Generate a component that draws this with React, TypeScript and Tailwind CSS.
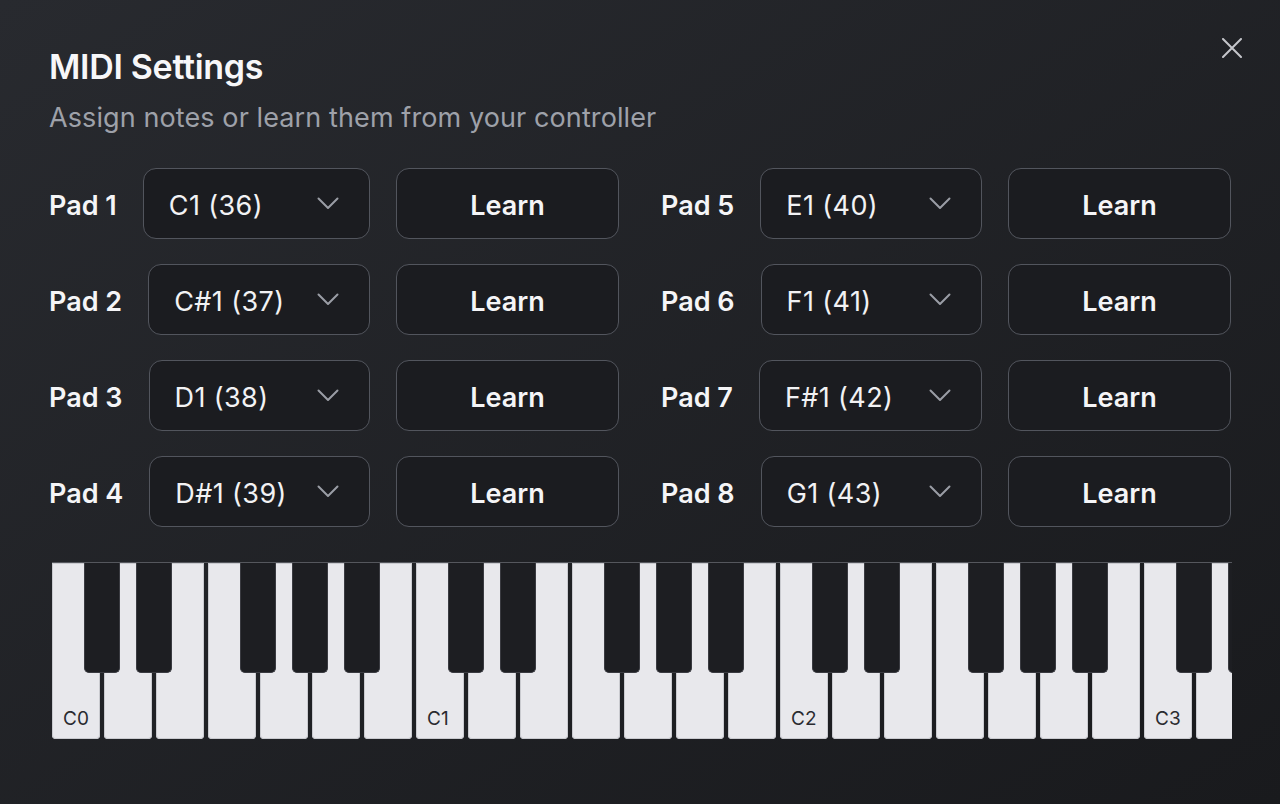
import React from "react";

const pads: [string, string][] = [
  ["Pad 1", "C1 (36)"],
  ["Pad 5", "E1 (40)"],
  ["Pad 2", "C#1 (37)"],
  ["Pad 6", "F1 (41)"],
  ["Pad 3", "D1 (38)"],
  ["Pad 7", "F#1 (42)"],
  ["Pad 4", "D#1 (39)"],
  ["Pad 8", "G1 (43)"],
];

function Chevron() {
  return (
    <svg width="22" height="13" viewBox="0 0 22 13" fill="none" className="shrink-0">
      <polyline points="1.5,1.5 11,11 20.5,1.5" stroke="#9a9da5" strokeWidth="2" strokeLinecap="round" strokeLinejoin="round" />
    </svg>
  );
}

function PadRow({ label, note }: { label: string; note: string }) {
  return (
    <div className="flex h-[71px] items-center gap-[26px]">
      <div className="whitespace-nowrap pt-[5px] text-[27px] font-semibold text-[#f5f5f7]">{label}</div>
      <div className="flex h-full flex-1 items-center justify-between rounded-[13px] border border-[#52555d] bg-[#1b1c20] pl-[25px] pr-[30px] text-[27px] tracking-[0.4px] text-[#f2f2f4]">
        <span className="pt-[5px]">{note}</span>
        <Chevron />
      </div>
      <button className="flex h-full w-[223px] shrink-0 items-center justify-center rounded-[13px] border border-[#52555d] bg-[#1b1c20] pt-[5px] text-[27px] font-semibold text-[#f5f5f7]">
        Learn
      </button>
    </div>
  );
}

function Keyboard() {
  const whiteCount = 24;
  const whites = Array.from({ length: whiteCount }, (_, i) => i);
  const blacks = whites.filter((i) => [0, 1, 3, 4, 5].includes(i % 7));
  return (
    <div className="relative ml-[3px] h-[177px] w-[1180px] overflow-hidden border-t border-[#55575d]">
      <div className="flex gap-[4px]">
        {whites.map((i) => (
          <div
            key={i}
            className="relative h-[176px] w-[48px] shrink-0 rounded-b-[4px] bg-[#e8e8ec] shadow-[inset_0_0_0_1px_#c9cacf]"
          >
            {i % 7 === 0 && (
              <span className="absolute bottom-[8px] left-[11px] text-[19px] leading-[24px] text-[#2a2b30]">
                C{Math.floor(i / 7)}
              </span>
            )}
          </div>
        ))}
      </div>
      {blacks.map((i) => (
        <div
          key={"b" + i}
          className="absolute top-0 h-[110px] w-[36px] rounded-b-[5px] border border-t-0 border-[#3a3b41] bg-[#1d1e22]"
          style={{ left: 52 * i + 32 }}
        />
      ))}
    </div>
  );
}

export default function App() {
  return (
    <div className="relative h-[804px] w-full overflow-hidden bg-linear-to-br from-[#282a2f] to-[#191a1d] font-[Inter,sans-serif]">
      <button className="absolute right-[38px] top-[38px] flex h-[20px] w-[20px] items-center justify-center">
        <svg width="20" height="20" viewBox="0 0 20 20" fill="none">
          <path d="M1 1L19 19M19 1L1 19" stroke="#c5c6cb" strokeWidth="2" strokeLinecap="round" />
        </svg>
      </button>
      <div className="px-[49px] pt-[47px]">
        <h1 className="text-[34px] font-semibold leading-[40px] tracking-[-0.3px] text-[#f7f7f9]">MIDI Settings</h1>
        <p className="mt-[15px] text-[27px] leading-[32px] tracking-[0.1px] text-[#9ea1a9]">Assign notes or learn them from your controller</p>
        <div className="mt-[34px] grid grid-cols-2 gap-x-[42px] gap-y-[25px]">
          {pads.map(([l, n]) => (
            <PadRow key={l} label={l} note={n} />
          ))}
        </div>
        <div className="mt-[35px]">
          <Keyboard />
        </div>
      </div>
    </div>
  );
}
